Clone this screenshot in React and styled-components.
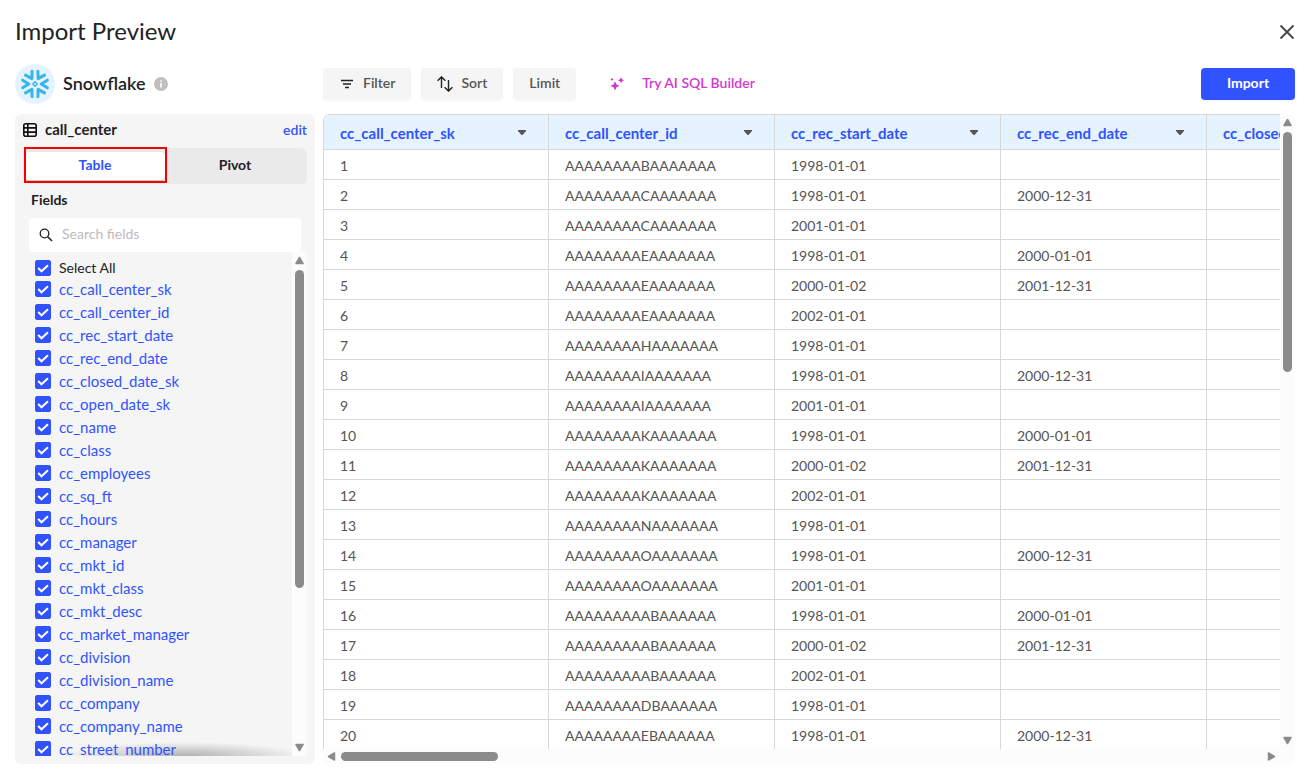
import { useState } from "react";
import styled, { createGlobalStyle, css } from "styled-components";

const GlobalStyle = createGlobalStyle`
  * {
    box-sizing: border-box;
  }

  body {
    margin: 0;
    background: #ffffff;
    color: #222222;
    font-family: Lato, "Liberation Sans", sans-serif;
    font-size: 14px;
    line-height: 20px;
  }

  button,
  input {
    font: inherit;
  }
`;

const Page = styled.div`
  display: flex;
  flex-direction: column;
  height: 100vh;
  padding: 14px 14px 14px 15px;
`;

const Header = styled.header`
  display: flex;
  align-items: center;
  justify-content: space-between;
  height: 36px;
  margin-bottom: 14px;
`;

const Title = styled.h1`
  margin: 0;
  padding-bottom: 2px;
  font-size: 24px;
  font-weight: 400;
  line-height: 32px;
`;

const CloseButton = styled.button`
  display: flex;
  padding: 0;
  border: none;
  background: none;
  cursor: pointer;
`;

const Body = styled.div`
  flex: 1;
  display: grid;
  grid-template-columns: 300px minmax(0, 1fr);
  grid-template-rows: 40px minmax(0, 1fr);
  gap: 10px 8px;
  min-height: 0;
`;

const Source = styled.div`
  display: flex;
  align-items: center;
  gap: 8px;
`;

const SourceLogo = styled.span`
  display: flex;
  align-items: center;
  justify-content: center;
  width: 40px;
  height: 40px;
  border-radius: 50%;
  background: #e5f2ff;
`;

const SourceName = styled.h2`
  margin: 0;
  padding-bottom: 2px;
  font-size: 18px;
  font-weight: 600;
  line-height: 24px;
`;

const Toolbar = styled.div`
  display: flex;
  align-items: center;
  gap: 10px;
`;

const ToolButton = styled.button`
  display: flex;
  align-items: center;
  gap: 8px;
  height: 32px;
  padding: 0 16px;
  border: none;
  border-radius: 4px;
  background: #f5f5f5;
  box-shadow: 0 1px 2px rgba(0, 0, 0, 0.04);
  color: #555555;
  font-weight: 600;
  cursor: pointer;
`;

const ButtonText = styled.span`
  padding-bottom: 2px;
`;

const AiButton = styled(ToolButton)`
  gap: 16px;
  margin-left: 8px;
  background: none;
  box-shadow: none;
  color: #d138d1;
`;

const ImportButton = styled(ToolButton)`
  justify-content: center;
  width: 94px;
  margin-left: auto;
  background: #3053ff;
  color: #ffffff;
  font-weight: 700;
`;

const Sidebar = styled.aside`
  display: flex;
  flex-direction: column;
  padding: 4px 8px 8px;
  border-radius: 6px;
  background: #f5f5f5;
  min-height: 0;
`;

const SourceTable = styled.div`
  display: flex;
  align-items: center;
  flex: none;
  gap: 8px;
  height: 24px;
  margin-bottom: 6px;
`;

const TableName = styled.span`
  padding-bottom: 2px;
  font-size: 15px;
  font-weight: 700;
`;

const EditLink = styled.a`
  margin-left: auto;
  color: #3053ff;
  font-weight: 600;
  text-decoration: none;
`;

const Tabs = styled.div`
  position: relative;
  display: grid;
  grid-template-columns: 1fr 1fr;
  flex: none;
  height: 36px;
  padding: 4px 2px;
  border-radius: 6px;
  background: #eaeaea;
`;

const Tab = styled.button`
  padding: 0 0 2px;
  border: none;
  border-radius: 4px;
  background: none;
  color: #222222;
  font-weight: 700;
  cursor: pointer;

  ${({ $active }) =>
    $active &&
    css`
      background: #ffffff;
      box-shadow: 0 1px 2px rgba(0, 0, 0, 0.2);
      color: #3053ff;
    `}
`;

const TabHighlight = styled.span`
  position: absolute;
  top: -1px;
  left: 1px;
  width: 143px;
  height: 36px;
  border: 2px solid #f50000;
  pointer-events: none;
`;

const FieldsTitle = styled.h3`
  margin: 6px 8px 8px;
  font-size: 14px;
  font-weight: 700;
  line-height: 20px;
`;

const SearchBox = styled.label`
  display: flex;
  align-items: center;
  flex: none;
  gap: 9px;
  height: 34px;
  margin: 0 6px;
  padding: 0 10px;
  border-radius: 4px;
  background: #ffffff;
`;

const SearchInput = styled.input`
  flex: 1;
  min-width: 0;
  padding: 0 0 2px;
  border: none;
  outline: none;
  background: none;
  color: #222222;

  &::placeholder {
    color: #bbbbbb;
  }
`;

const FieldsPane = styled.div`
  display: grid;
  grid-template-columns: minmax(0, 1fr) 15px;
  flex: 1;
  min-height: 0;
`;

/* the gradient is a soft shade telling that the list goes on below */
const FieldList = styled.ul`
  margin: 0;
  padding: 5px 12px 0;
  overflow: hidden;
  background: radial-gradient(ellipse 45% 100% at 60% 100%, rgba(0, 0, 0, 0.28), rgba(0, 0, 0, 0))
    bottom / 100% 14px no-repeat;
  list-style: none;
`;

const FieldItem = styled.li`
  height: 23px;
  color: #3053ff;
  font-size: 15px;

  &:first-child {
    height: 21px;
    color: #222222;
    font-size: 14px;
  }
`;

const FieldLabel = styled.label`
  display: flex;
  align-items: center;
  gap: 8px;
  height: 22px;
  cursor: pointer;
`;

const Checkbox = styled.input`
  appearance: none;
  flex: none;
  width: 16px;
  height: 16px;
  margin: 0;
  border: 1px solid #3053ff;
  border-radius: 2px;
  background: #ffffff;
  cursor: pointer;

  &:checked {
    background: #3053ff
      url("data:image/svg+xml,%3Csvg xmlns='http://www.w3.org/2000/svg' viewBox='0 0 14 14' fill='none' stroke='white' stroke-width='2'%3E%3Cpath d='M2.2 7l3.300 3.300L12 4.300'/%3E%3C/svg%3E")
      center / 14px no-repeat;
  }
`;

const TablePane = styled.main`
  display: grid;
  grid-template-columns: minmax(0, 1fr) 15px;
  grid-template-rows: minmax(0, 1fr) 15px;
  border-radius: 6px;
  background: #fcfcfc;
  overflow: hidden;
`;

const TableViewport = styled.div`
  overflow: hidden;
  background: #ffffff;
`;

const DataTable = styled.table`
  width: 1110px;
  border-collapse: separate;
  border-spacing: 0;
  table-layout: fixed;
  border-top: 1px solid #d8d8d8;
  border-left: 1px solid #d8d8d8;
  border-top-left-radius: 6px;
`;

const Column = styled.col`
  width: ${({ $width }) => $width}px;
`;

const HeadCell = styled.th`
  height: 35px;
  padding: 1px 16px 0;
  border-right: 1px solid #d8d8d8;
  border-bottom: 1px solid #d8d8d8;
  background: #e5f2ff;
  color: #3053ff;
  font-size: 15px;
  font-weight: 700;
  text-align: left;

  &:first-child {
    border-top-left-radius: 5px;
  }
`;

const HeadContent = styled.div`
  display: flex;
  align-items: center;
  justify-content: space-between;
  padding-right: 6px;
`;

const Cell = styled.td`
  height: 30px;
  padding: 2px 16px 0;
  border-right: 1px solid #d8d8d8;
  border-bottom: 1px solid #d8d8d8;
  color: #555555;
`;

const Track = styled.div`
  display: flex;
  flex-direction: ${({ $horizontal }) => ($horizontal ? "row" : "column")};
  align-items: center;
  justify-content: space-between;
  padding: ${({ $horizontal }) => ($horizontal ? "0 4px" : "4px 0")};
  background: #fcfcfc;
`;

const Rail = styled.div`
  display: flex;
  flex-direction: ${({ $horizontal }) => ($horizontal ? "row" : "column")};
  flex: 1;
  margin: ${({ $horizontal }) => ($horizontal ? "0 5px" : "5px 0")};
`;

const Thumb = styled.span`
  flex: 0 0 ${({ $size }) => $size}%;
  min-width: 9px;
  min-height: 9px;
  border-radius: 5px;
  background: #8b8b8b;
`;

const arrowPaths = {
  up: "M4.5 1.5L8 7.5H1z",
  down: "M4.5 7.5L8 1.5H1z",
  left: "M1.5 4.5L7.5 1V8z",
  right: "M7.5 4.5L1.5 1V8z",
};

function Arrow({ direction }) {
  return (
    <svg width="9" height="9" viewBox="0 0 9 9" fill="#8b8b8b" stroke="#8b8b8b" strokeWidth="1.5" strokeLinejoin="round">
      <path d={arrowPaths[direction]} />
    </svg>
  );
}

function Scrollbar({ horizontal, size }) {
  return (
    <Track $horizontal={horizontal} aria-hidden="true">
      <Arrow direction={horizontal ? "left" : "up"} />
      <Rail $horizontal={horizontal}>
        <Thumb $size={size} />
      </Rail>
      <Arrow direction={horizontal ? "right" : "down"} />
    </Track>
  );
}

function SnowflakeLogo() {
  return (
    <svg width="30" height="30" viewBox="-15 -15 30 30" fill="none" stroke="#37b5ea" strokeWidth="3" strokeLinecap="round" strokeLinejoin="round">
      {[0, 60, 120, 180, 240, 300].map((angle) => (
        <path key={angle} transform={`rotate(${angle})`} d="M12.4 -3.8L6.2 0L12.4 3.8" />
      ))}
      <rect x="-1.7" y="-1.7" width="3.4" height="3.4" rx="0.8" strokeWidth="1.5" transform="rotate(45)" />
    </svg>
  );
}

function InfoIcon() {
  return (
    <svg width="14" height="14" viewBox="0 0 14 14">
      <circle cx="7" cy="7" r="7" fill="#bfbfbf" />
      <path d="M7 6v4.6M7 3.2v1.6" stroke="#ffffff" strokeWidth="1.6" />
    </svg>
  );
}

function TableIcon() {
  return (
    <svg width="14" height="14" viewBox="0 0 14 14" fill="none" stroke="#111111" strokeWidth="1.6">
      <rect x="0.8" y="0.8" width="12.4" height="12.4" rx="2" />
      <path d="M4.8 1v12M1 4.9h12M1 9.1h12" />
    </svg>
  );
}

function FilterIcon() {
  return (
    <svg width="16" height="16" viewBox="0 0 16 16" stroke="#222222" strokeWidth="1.4">
      <path d="M2 4.5h12M4 8h8M6 11.5h4" />
    </svg>
  );
}

function SortIcon() {
  return (
    <svg width="16" height="16" viewBox="0 0 16 16" fill="none" stroke="#222222" strokeWidth="1.4">
      <path d="M4.5 12V1M0.6 4.8l3.9-3.9 3.9 3.9M11.500 4v11M7.600 11.200l3.900 3.900 3.900-3.900" />
    </svg>
  );
}

function SparklesIcon() {
  return (
    <svg width="16" height="16" viewBox="0 0 16 16" fill="#d138d1">
      <path d="M5 5.2l1.5 3.200L9.600 9.700 6.500 11.200 5 14.400 3.500 11.200.4 9.700l3.100-1.300z" />
      <path d="M11 1.200l1 2.100 2.100 1-2.100 1-1 2.100-1-2.100-2.100-1 2.100-1z" />
      <path d="M2 1.700l.6 1 1 .6-1 .6-.6 1-.6-1-1-.6 1-.6z" />
    </svg>
  );
}

function CloseIcon() {
  return (
    <svg width="16" height="16" viewBox="0 0 16 16" stroke="#444444" strokeWidth="1.8">
      <path d="M1.5 1.5l13 13M14.5 1.5l-13 13" />
    </svg>
  );
}

function SearchIcon() {
  return (
    <svg width="14" height="14" viewBox="0 0 14 14" fill="none" stroke="#222222" strokeWidth="1.3">
      <circle cx="5.5" cy="5.5" r="4.3" />
      <path d="M8.7 8.7l4.3 4.3" strokeWidth="1.6" />
    </svg>
  );
}

function CaretIcon() {
  return (
    <svg width="8" height="6" viewBox="0 0 8 6" fill="#555555">
      <path d="M0 0h8v1L4.5 5h-1L0 1z" />
    </svg>
  );
}

const fields = [
  "cc_call_center_sk",
  "cc_call_center_id",
  "cc_rec_start_date",
  "cc_rec_end_date",
  "cc_closed_date_sk",
  "cc_open_date_sk",
  "cc_name",
  "cc_class",
  "cc_employees",
  "cc_sq_ft",
  "cc_hours",
  "cc_manager",
  "cc_mkt_id",
  "cc_mkt_class",
  "cc_mkt_desc",
  "cc_market_manager",
  "cc_division",
  "cc_division_name",
  "cc_company",
  "cc_company_name",
  "cc_street_number",
];

const columns = [
  { name: "cc_call_center_sk", width: 225 },
  { name: "cc_call_center_id", width: 226 },
  { name: "cc_rec_start_date", width: 226 },
  { name: "cc_rec_end_date", width: 206 },
  { name: "cc_closed_date_sk", width: 226 },
];

const rows = [
  ["AAAAAAAABAAAAAAA", "1998-01-01", ""],
  ["AAAAAAAACAAAAAAA", "1998-01-01", "2000-12-31"],
  ["AAAAAAAACAAAAAAA", "2001-01-01", ""],
  ["AAAAAAAAEAAAAAAA", "1998-01-01", "2000-01-01"],
  ["AAAAAAAAEAAAAAAA", "2000-01-02", "2001-12-31"],
  ["AAAAAAAAEAAAAAAA", "2002-01-01", ""],
  ["AAAAAAAAHAAAAAAA", "1998-01-01", ""],
  ["AAAAAAAAIAAAAAAA", "1998-01-01", "2000-12-31"],
  ["AAAAAAAAIAAAAAAA", "2001-01-01", ""],
  ["AAAAAAAAKAAAAAAA", "1998-01-01", "2000-01-01"],
  ["AAAAAAAAKAAAAAAA", "2000-01-02", "2001-12-31"],
  ["AAAAAAAAKAAAAAAA", "2002-01-01", ""],
  ["AAAAAAAANAAAAAAA", "1998-01-01", ""],
  ["AAAAAAAAOAAAAAAA", "1998-01-01", "2000-12-31"],
  ["AAAAAAAAOAAAAAAA", "2001-01-01", ""],
  ["AAAAAAAAABAAAAAA", "1998-01-01", "2000-01-01"],
  ["AAAAAAAAABAAAAAA", "2000-01-02", "2001-12-31"],
  ["AAAAAAAAABAAAAAA", "2002-01-01", ""],
  ["AAAAAAAADBAAAAAA", "1998-01-01", ""],
  ["AAAAAAAAEBAAAAAA", "1998-01-01", "2000-12-31"],
];

export default function ImportPreview() {
  const [tab, setTab] = useState("Table");
  const [selected, setSelected] = useState(fields);

  const toggleField = (name) => {
    setSelected((current) =>
      current.includes(name) ? current.filter((item) => item !== name) : [...current, name]
    );
  };

  const allSelected = selected.length === fields.length;

  return (
    <>
      <GlobalStyle />
      <Page>
        <Header>
          <Title>Import Preview</Title>
          <CloseButton type="button" aria-label="Close">
            <CloseIcon />
          </CloseButton>
        </Header>

        <Body>
          <Source>
            <SourceLogo>
              <SnowflakeLogo />
            </SourceLogo>
            <SourceName>Snowflake</SourceName>
            <InfoIcon />
          </Source>

          <Toolbar>
            <ToolButton type="button">
              <FilterIcon />
              <ButtonText>Filter</ButtonText>
            </ToolButton>
            <ToolButton type="button">
              <SortIcon />
              <ButtonText>Sort</ButtonText>
            </ToolButton>
            <ToolButton type="button">
              <ButtonText>Limit</ButtonText>
            </ToolButton>
            <AiButton type="button">
              <SparklesIcon />
              <ButtonText>Try AI SQL Builder</ButtonText>
            </AiButton>
            <ImportButton type="button">
              <ButtonText>Import</ButtonText>
            </ImportButton>
          </Toolbar>

          <Sidebar>
            <SourceTable>
              <TableIcon />
              <TableName>call_center</TableName>
              <EditLink href="#edit">edit</EditLink>
            </SourceTable>

            <Tabs>
              {["Table", "Pivot"].map((name) => (
                <Tab key={name} type="button" $active={tab === name} onClick={() => setTab(name)}>
                  {name}
                </Tab>
              ))}
              <TabHighlight />
            </Tabs>

            <FieldsTitle>Fields</FieldsTitle>
            <SearchBox>
              <SearchIcon />
              <SearchInput type="text" placeholder="Search fields" aria-label="Search fields" />
            </SearchBox>

            <FieldsPane>
              <FieldList>
                <FieldItem>
                  <FieldLabel>
                    <Checkbox
                      type="checkbox"
                      checked={allSelected}
                      onChange={() => setSelected(allSelected ? [] : fields)}
                    />
                    Select All
                  </FieldLabel>
                </FieldItem>
                {fields.map((name) => (
                  <FieldItem key={name}>
                    <FieldLabel>
                      <Checkbox
                        type="checkbox"
                        checked={selected.includes(name)}
                        onChange={() => toggleField(name)}
                      />
                      {name}
                    </FieldLabel>
                  </FieldItem>
                ))}
              </FieldList>
              <Scrollbar size={68} />
            </FieldsPane>
          </Sidebar>

          <TablePane>
            <TableViewport>
              <DataTable>
                <colgroup>
                  {columns.map((column) => (
                    <Column key={column.name} $width={column.width} />
                  ))}
                </colgroup>
                <thead>
                  <tr>
                    {columns.map((column) => (
                      <HeadCell key={column.name}>
                        <HeadContent>
                          {column.name}
                          <CaretIcon />
                        </HeadContent>
                      </HeadCell>
                    ))}
                  </tr>
                </thead>
                <tbody>
                  {rows.map(([id, start, end], index) => (
                    <tr key={index}>
                      <Cell>{index + 1}</Cell>
                      <Cell>{id}</Cell>
                      <Cell>{start}</Cell>
                      <Cell>{end}</Cell>
                      <Cell />
                    </tr>
                  ))}
                </tbody>
              </DataTable>
            </TableViewport>
            <Scrollbar size={40} />
            <Scrollbar horizontal size={17} />
          </TablePane>
        </Body>
      </Page>
    </>
  );
}
